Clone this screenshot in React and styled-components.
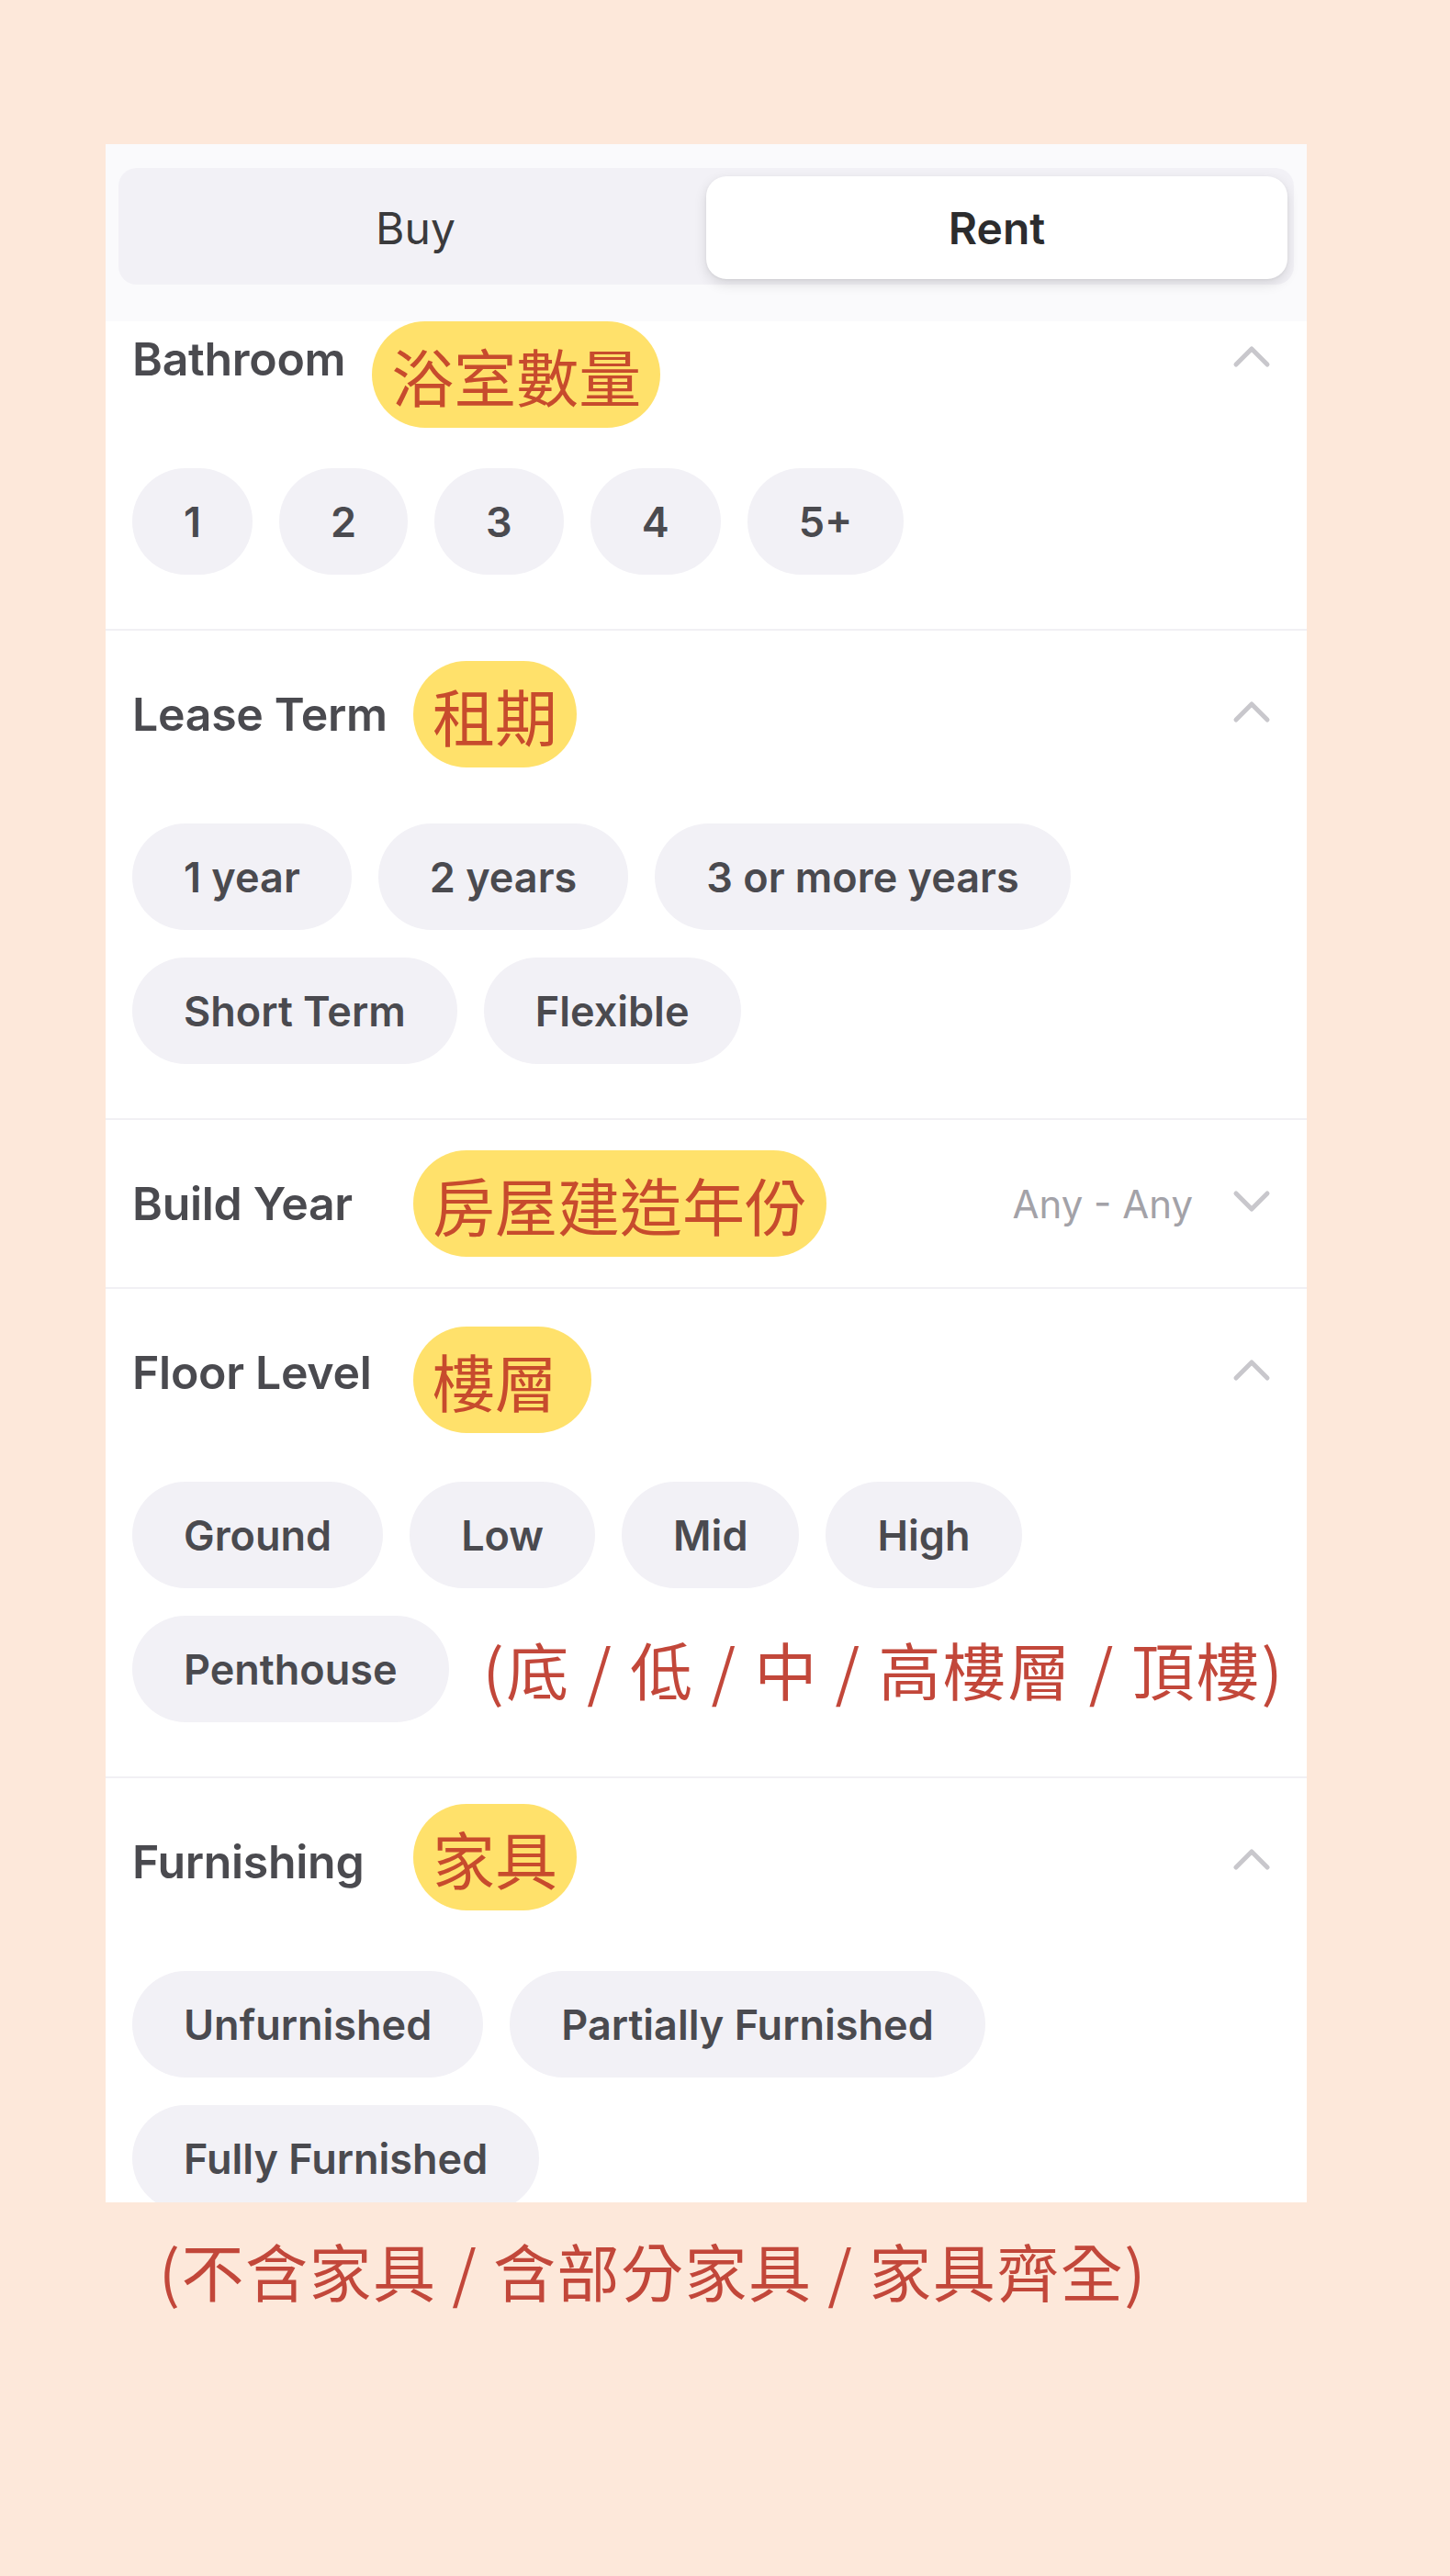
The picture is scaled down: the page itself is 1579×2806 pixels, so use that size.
import React from "react";
import styled, { createGlobalStyle } from "styled-components";

const sections = [
  {
    title: "Bathroom",
    note: "浴室數量",
    tight: true,
    shift: 17,
    options: ["1", "2", "3", "4", "5+"],
  },
  {
    title: "Lease Term",
    note: "租期",
    options: ["1 year", "2 years", "3 or more years", "Short Term", "Flexible"],
  },
  { title: "Build Year", note: "房屋建造年份", value: "Any - Any" },
  {
    title: "Floor Level",
    note: "樓層",
    shift: 8,
    extra: 16,
    options: ["Ground", "Low", "Mid", "High", "Penthouse"],
    aside: "(底 / 低 / 中 / 高樓層 / 頂樓)",
  },
  {
    title: "Furnishing",
    note: "家具",
    shift: -5,
    options: ["Unfurnished", "Partially Furnished", "Fully Furnished"],
  },
];

const Chevron = ({ up }) => (
  <ChevronIcon width="42" height="26" viewBox="0 0 42 26" $up={up}>
    <polyline
      points={up ? "4,22 21,5 38,22" : "4,4 21,21 38,4"}
      fill="none"
      stroke="#c8c7cc"
      strokeWidth="5"
      strokeLinecap="round"
      strokeLinejoin="round"
    />
  </ChevronIcon>
);

export default function App() {
  return (
    <Page>
      <GlobalStyle />
      <Panel>
        <Header>
          <Segmented>
            <Segment>Buy</Segment>
            <Segment $active>Rent</Segment>
          </Segmented>
        </Header>
        {sections.map((s, i) => (
          <Section key={s.title} $first={i === 0}>
            <HeadRow>
              <Title $tight={s.tight}>{s.title}</Title>
              <Tag $shift={s.shift || 0} $extra={s.extra || 0}>
                {s.note}
              </Tag>
              <Right>
                {s.value && <Value>{s.value}</Value>}
                <Chevron up={!s.value} />
              </Right>
            </HeadRow>
            {s.options && (
              <Chips>
                {s.options.map((o) => (
                  <Chip key={o}>{o}</Chip>
                ))}
                {s.aside && <Aside>{s.aside}</Aside>}
              </Chips>
            )}
          </Section>
        ))}
      </Panel>
      <Caption>(不含家具 / 含部分家具 / 家具齊全)</Caption>
    </Page>
  );
}

const GlobalStyle = createGlobalStyle`
  html, body {
    margin: 0;
    padding: 0;
  }
  body {
    background: #fde8da;
    font-family: Inter, "Noto Sans", "Noto Sans CJK TC", sans-serif;
  }
`;

const Page = styled.div`
  min-height: 2806px;
  box-sizing: border-box;
  padding: 157px 0 0 115px;
  background: #fde8da;
`;

const Panel = styled.div`
  width: 1308px;
  height: 2242px;
  background: #ffffff;
  overflow: hidden;
`;

const Header = styled.div`
  position: relative;
  z-index: 1;
  height: 193px;
  box-sizing: border-box;
  padding: 26px 14px 0;
  background: #fafafc;
`;

const Segmented = styled.div`
  display: grid;
  grid-template-columns: 1fr 1fr;
  height: 127px;
  box-sizing: border-box;
  padding: 9px 7px 6px 7px;
  background: #f2f1f6;
  border-radius: 20px;
`;

const Segment = styled.div`
  display: flex;
  align-items: center;
  justify-content: center;
  font-size: 48px;
  font-weight: ${(p) => (p.$active ? 600 : 400)};
  color: ${(p) => (p.$active ? "#2c2c2e" : "#3a3a3c")};
  background: ${(p) => (p.$active ? "#ffffff" : "transparent")};
  border-radius: 22px;
  box-shadow: ${(p) =>
    p.$active ? "0 5px 14px rgba(0, 0, 0, 0.12), 0 1px 3px rgba(0, 0, 0, 0.06)" : "none"};
`;

const Section = styled.section`
  margin-top: ${(p) => (p.$first ? "-50px" : "0")};
  border-bottom: 2px solid #f1f0f4;
`;

const HeadRow = styled.div`
  display: flex;
  align-items: center;
  height: 182px;
  padding: 0 39px 0 29px;
`;

const Title = styled.h3`
  margin: 0 ${(p) => (p.$tight ? "29px" : "0")} 0 0;
  width: ${(p) => (p.$tight ? "auto" : "306px")};
  font-size: 50px;
  font-weight: 600;
  color: #4a4a4f;
  letter-spacing: -0.3px;
`;

const Tag = styled.span`
  display: inline-flex;
  align-items: center;
  height: 116px;
  padding: 0 ${(p) => 21 + p.$extra}px 0 21px;
  border-radius: 58px;
  background: #ffe16b;
  color: #c74b2d;
  font-family: "Noto Sans CJK TC", sans-serif;
  font-size: 68px;
  transform: translateY(${(p) => p.$shift}px);
`;

const Right = styled.div`
  display: flex;
  align-items: center;
  gap: 43px;
  margin-left: auto;
`;

const Value = styled.span`
  font-size: 42px;
  color: #a3a2a8;
`;

const ChevronIcon = styled.svg`
  display: block;
  transform: translateY(${(p) => (p.$up ? "-3px" : "-2px")});
`;

const Chips = styled.div`
  display: flex;
  flex-wrap: wrap;
  align-items: center;
  gap: 30px 29px;
  padding: 28px 8px 59px 29px;
`;

const Chip = styled.span`
  display: inline-flex;
  align-items: center;
  height: 116px;
  padding: 0 56px;
  border-radius: 58px;
  background: #f2f1f6;
  color: #4a4a4f;
  font-size: 45px;
  font-weight: 600;
`;

const Aside = styled.span`
  flex-shrink: 0;
  margin-left: 8px;
  white-space: nowrap;
  color: #c2473a;
  font-family: "Noto Sans CJK TC", sans-serif;
  font-size: 68px;
  line-height: 1.2;
  letter-spacing: 2.5px;
`;

const Caption = styled.p`
  margin: 33px 0 0 58px;
  color: #c2473a;
  font-family: "Noto Sans CJK TC", sans-serif;
  font-size: 68px;
  line-height: 1.2;
  letter-spacing: 1.5px;
`;
